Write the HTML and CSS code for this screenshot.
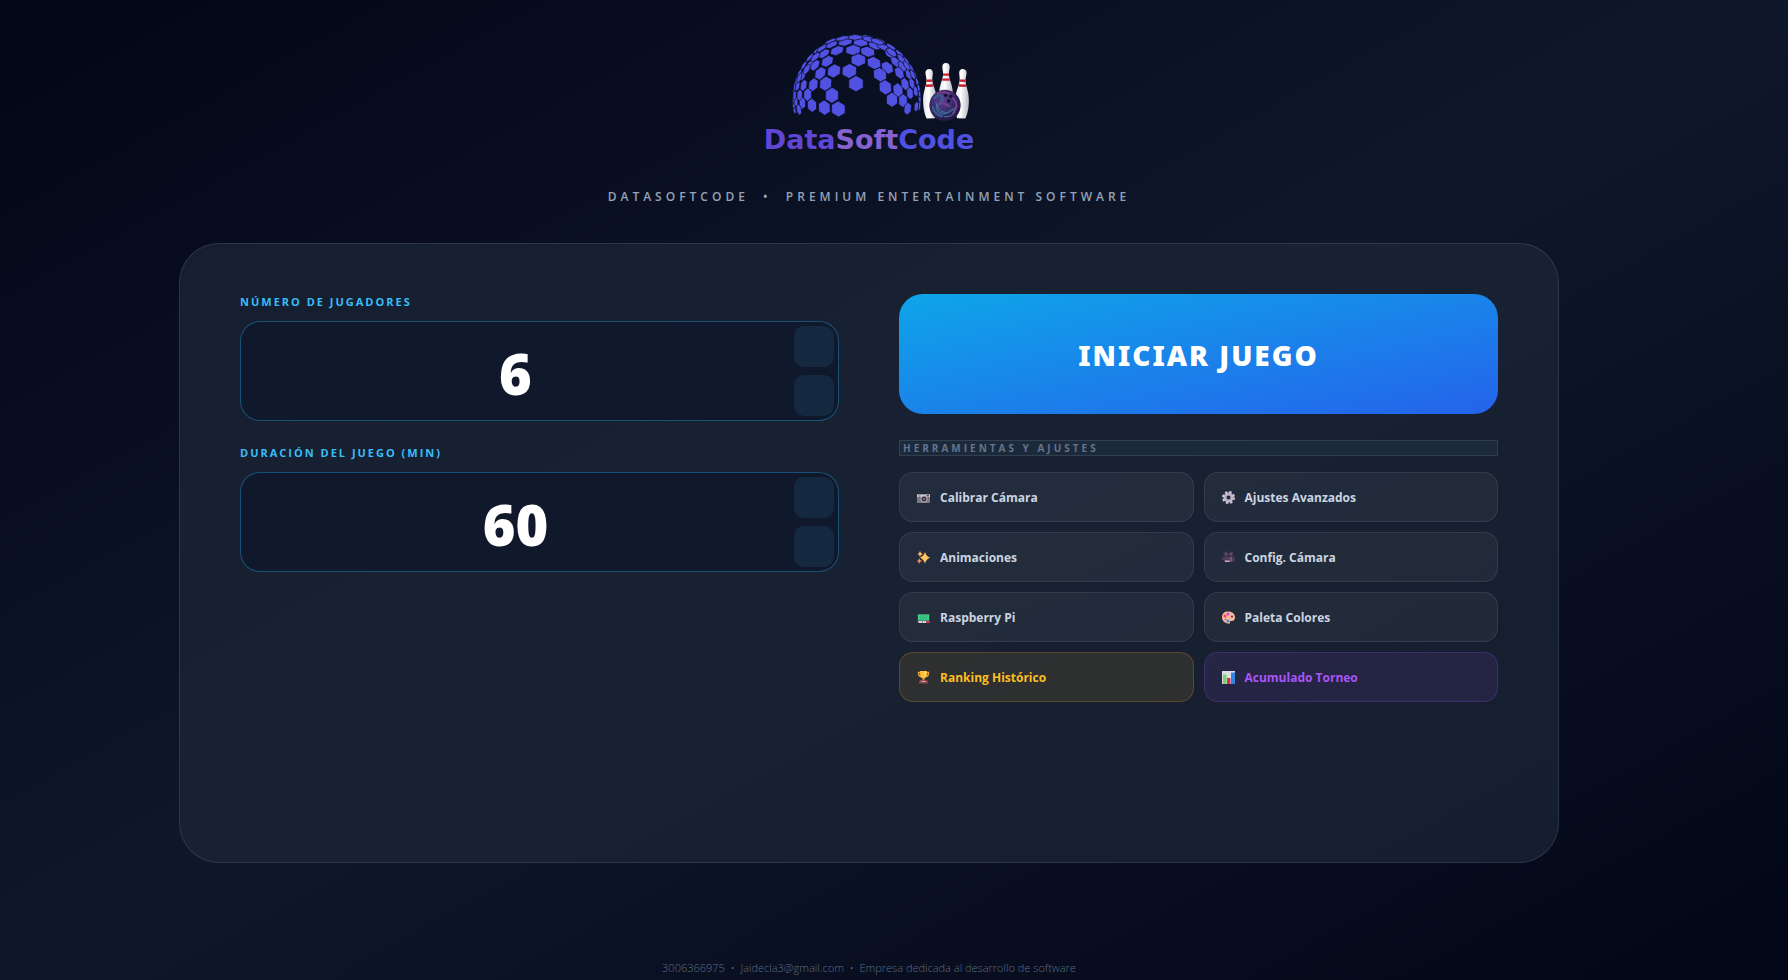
FILE: index.html
```html
<!DOCTYPE html>
<html lang="es">
<head>
    <meta charset="UTF-8">
    <meta name="viewport" content="width=device-width, initial-scale=1.0">
    <title>DataSoftCode</title>
    <link rel="stylesheet" href="styles.css">
</head>
<body>
    <header class="header">
        <svg class="logo" viewBox="66 40 642 273" aria-hidden="true">
            <defs>
                <radialGradient id="ball-fill" cx="0.4" cy="0.35" r="0.65">
                    <stop offset="0" stop-color="#5b3f8f"/>
                    <stop offset="0.55" stop-color="#3a2d6b"/>
                    <stop offset="1" stop-color="#241746"/>
                </radialGradient>
                <linearGradient id="pin-fill" x1="0" x2="1" y1="0" y2="0">
                    <stop offset="0" stop-color="#e4e2e8"/>
                    <stop offset="0.4" stop-color="#ffffff"/>
                    <stop offset="1" stop-color="#b9b7bf"/>
                </linearGradient>
                <g id="pin">
                    <path fill="url(#pin-fill)" d="M0 0c8 0 12 6 11 14-1 9-3 14-2 22 1 17 12 31 12 62 0 22-4 40-9 50h-24c-5-10-9-28-9-50 0-31 11-45 12-62 1-8-1-13-2-22-1-8 3-14 11-14z"/>
                    <path stroke="#c5202f" stroke-width="7" d="M-9 35H9M-11 50H11"/>
                </g>
            </defs>
            <g id="dome" fill="#5152e2" stroke="#080d1f" stroke-width="2"></g>
            <use href="#pin" transform="translate(567 148) rotate(-2)"/>
            <use href="#pin" transform="translate(669 148) rotate(2)"/>
            <use href="#pin" transform="translate(618 130)"/>
            <circle cx="615" cy="257" r="47" fill="url(#ball-fill)"/>
            <g fill="none" stroke-linecap="round">
                <path stroke="#39608f" stroke-width="6" d="M583 236c14-16 28-8 24 5s-20 10-17 25 24 20 36 11 20-7 24-18M578 262c3 15 14 24 28 28"/>
                <path stroke="#7d3b91" stroke-width="5" d="M592 222c14-7 26-6 38 1M638 235c15 13 14 32 1 45M599 252c13-4 21 2 30 8"/>
                <path stroke="#447fa5" stroke-width="3" d="M588 250c4 16 12 25 27 28M613 291c14 2 24-4 31-12"/>
            </g>
            <g fill="#150f2b">
                <circle cx="617" cy="227" r="5"/>
                <circle cx="632" cy="230" r="5"/>
                <circle cx="626" cy="244" r="5"/>
            </g>
        </svg>
        <h1 class="brand"><span class="brand-data">Data</span><span class="brand-soft">Soft</span><span class="brand-code">Code</span></h1>
        <p class="tagline">DATASOFTCODE &nbsp;•&nbsp; PREMIUM ENTERTAINMENT SOFTWARE</p>
    </header>

    <main class="card">
        <section class="column">
            <div class="field">
                <label for="players">NÚMERO DE JUGADORES</label>
                <div class="spin-box">
                    <input type="number" id="players" value="6" min="1" max="12">
                    <div class="spin-buttons">
                        <button type="button" aria-label="Más jugadores" onclick="step('players', 1)"></button>
                        <button type="button" aria-label="Menos jugadores" onclick="step('players', -1)"></button>
                    </div>
                </div>
            </div>
            <div class="field">
                <label for="duration">DURACIÓN DEL JUEGO (MIN)</label>
                <div class="spin-box">
                    <input type="number" id="duration" value="60" min="5" max="300">
                    <div class="spin-buttons">
                        <button type="button" aria-label="Más minutos" onclick="step('duration', 5)"></button>
                        <button type="button" aria-label="Menos minutos" onclick="step('duration', -5)"></button>
                    </div>
                </div>
            </div>
        </section>

        <section class="column">
            <button type="button" class="start-btn">INICIAR JUEGO</button>
            <h2 class="tools-title">HERRAMIENTAS Y AJUSTES</h2>
            <div class="tools">
                <button type="button" class="tool-btn">
                    <svg class="icon" viewBox="0 0 26 26">
                        <path fill="#7d7781" d="M0 7h26v17H0z"/>
                        <path fill="#d9d3dc" d="M0 7h26v5H0z"/>
                        <path fill="#4c4354" d="M3 9h4v2H3zM19 8h5v3h-5z"/>
                        <circle cx="14" cy="16" r="7" fill="#b5adb9"/>
                        <circle cx="14" cy="16" r="5" fill="#3f3449"/>
                        <circle cx="14" cy="16" r="2" fill="#857a91"/>
                    </svg>
                    Calibrar Cámara
                </button>
                <button type="button" class="tool-btn">
                    <svg class="icon" viewBox="0 0 26 26">
                        <circle cx="13" cy="13" r="11" fill="none" stroke="#cfc8d6" stroke-width="4" stroke-dasharray="5 3.64"/>
                        <circle cx="13" cy="13" r="7" fill="none" stroke="#c3bbcb" stroke-width="6"/>
                        <circle cx="13" cy="13" r="5" fill="none" stroke="#9d94a8" stroke-width="2"/>
                    </svg>
                    Ajustes Avanzados
                </button>
                <button type="button" class="tool-btn">
                    <svg class="icon" viewBox="0 0 26 26">
                        <path fill="#ffc45d" d="M16 2c2 6 4 9 10 11-6 3-8 6-10 12-2-6-5-9-10-12 5-2 8-5 10-11z"/>
                        <path fill="#ffb267" d="M6 0l2 4 4 2-4 2-2 4-2-4-3-2 3-2z"/>
                        <path fill="#ff8f65" d="M4 14l2 4 4 2-4 2-2 4-1-4-3-2 3-2z"/>
                    </svg>
                    Animaciones
                </button>
                <button type="button" class="tool-btn">
                    <svg class="icon" viewBox="0 0 26 26">
                        <circle cx="8" cy="6" r="5" fill="#49364f"/>
                        <circle cx="18" cy="6" r="5" fill="#49364f"/>
                        <circle cx="8" cy="6" r="2" fill="#6d5875"/>
                        <circle cx="18" cy="6" r="2" fill="#6d5875"/>
                        <path fill="#513d59" d="M4 11h17v11H4zM0 13h4v5H0zM21 14l4-3v12l-4-3z"/>
                        <path fill="#d4a7c5" d="M6 19h9v3H6z"/>
                        <path fill="#8f7b9a" d="M17 12h2v9h-2z"/>
                    </svg>
                    Config. Cámara
                </button>
                <button type="button" class="tool-btn">
                    <svg class="icon" viewBox="0 0 26 26">
                        <path fill="#59495f" d="M1 6h24v18H1z"/>
                        <path fill="#3fd08b" d="M2 7h22v12H2z"/>
                        <path stroke="#25976a" stroke-width="1" d="M5 10h16M5 13h16M5 16h16"/>
                        <path fill="#d7d0dc" d="M3 20h7v4H3zM11 20h7v4h-7z"/>
                        <path fill="#e52c62" d="M19 20h6v4h-6z"/>
                    </svg>
                    Raspberry Pi
                </button>
                <button type="button" class="tool-btn">
                    <svg class="icon" viewBox="0 0 26 26">
                        <path fill="#ffb49a" d="M12 1c9 0 14 5 14 12 0 5-3 7-7 7-3 0-4 1-3 3 0 2-1 3-4 2C5 24 0 19 0 12S5 1 12 1z"/>
                        <circle cx="20" cy="11" r="2" fill="#343044"/>
                        <circle cx="12" cy="6" r="3" fill="#b34bea"/>
                        <circle cx="6" cy="10" r="3" fill="#f23c67"/>
                        <circle cx="7" cy="17" r="2" fill="#3fa9b8"/>
                        <circle cx="12" cy="20" r="3" fill="#3c8fe4"/>
                    </svg>
                    Paleta Colores
                </button>
                <button type="button" class="tool-btn ranking">
                    <svg class="icon" viewBox="0 0 26 26">
                        <path fill="none" stroke="#e8a03c" stroke-width="3" d="M7 3H3c0 6 2 8 5 8M19 3h4c0 6-2 8-5 8"/>
                        <path fill="#ffbd3e" d="M6 0h14v6c0 6-3 9-7 9s-7-3-7-9z"/>
                        <path fill="#ffe07a" d="M15 1h3v6l-3 4z"/>
                        <path fill="#e8953a" d="M11 14h4v5h-4z"/>
                        <path fill="#8d4a5b" d="M6 18h14l3 7H3z"/>
                        <path fill="#f0b060" d="M9 20h8v2H9z"/>
                    </svg>
                    Ranking Histórico
                </button>
                <button type="button" class="tool-btn torneo">
                    <svg class="icon" viewBox="0 0 26 26">
                        <path fill="#d9dfe4" d="M0 0h26v26H0z"/>
                        <path fill="#78d65e" d="M2 7h7v19H2z"/>
                        <path fill="#d8305f" d="M10 14h7v12h-7z"/>
                        <path fill="#2f86dc" d="M18 3h8v23h-8z"/>
                    </svg>
                    Acumulado Torneo
                </button>
            </div>
        </section>
    </main>

    <footer class="footer">3006366975 &nbsp;•&nbsp; Jaidecla3@gmail.com &nbsp;•&nbsp; Empresa dedicada al desarrollo de software</footer>

    <script>
        // Hexagon centres of the logo dome
        const cells = [
            [295,268],[253,264],[216,257],[187,250],[168,246],[177,270],
            [276,227],[203,225],[179,226],[164,227],
            [257,192],[220,195],[191,197],[173,199],
            [282,154],[241,161],[210,136],[188,168],[328,154],[348,192],
            [355,121],[262,125],[225,137],[200,149],[178,175],
            [291,93],[252,102],[226,112],[339,91],[316,68],[275,75],[245,86],
            [383,96],[362,69],[345,53],[307,56],[272,64],[405,78],[388,59],
            [451,104],[428,81],[412,66],[402,130],[442,144],[467,127],[455,98],
            [487,140],[420,165],[478,160],[436,203],[456,240],[474,211],
            [489,243],[495,193],[506,165],[510,221],[516,192],[527,215],
            [503,267],[529,261],[484,118],[500,138],[518,165]
        ];
        // Outer row of the dome, as angles
        const rim = [171, 176, 181, 186, 192, 198, 205, 213, 222, 232, 243, 255, 267, 279, 291, 303, 313, 322, 330, 337, 344, 350, 356, 361, 366];
        const dome = { x: 350, y: 240, r: 199, size: 25 };

        // Each hexagon is flattened towards the rim of the sphere
        function hexPoints(cx, cy) {
            const dx = cx - dome.x;
            const dy = cy - dome.y;
            const dist = Math.hypot(dx, dy);
            const flat = Math.sqrt(Math.max(0.03, 1 - (dist / dome.r) ** 2));
            const ux = dx / dist;
            const uy = dy / dist;
            const size = dome.size * (1 - 0.6 * (1 - flat) * Math.abs(ux));
            const points = [];
            for (let i = 0; i < 6; i++) {
                const a = Math.PI / 180 * (60 * i + 30);
                const hx = Math.cos(a) * size;
                const hy = Math.sin(a) * size;
                const along = (hx * ux + hy * uy) * (flat - 1);
                points.push(`${(cx + hx + along * ux).toFixed(1)},${(cy + hy + along * uy).toFixed(1)}`);
            }
            return points.join(' ');
        }

        function drawDome() {
            const group = document.getElementById('dome');
            const outer = rim.map(deg => {
                const a = deg * Math.PI / 180;
                return [dome.x + Math.cos(a) * 189, dome.y + Math.sin(a) * 189];
            });
            outer.concat(cells).forEach(([x, y]) => {
                const hex = document.createElementNS('http://www.w3.org/2000/svg', 'polygon');
                hex.setAttribute('points', hexPoints(x, y));
                group.appendChild(hex);
            });
        }

        function step(id, amount) {
            const input = document.getElementById(id);
            const next = Number(input.value) + amount;
            input.value = Math.min(Number(input.max), Math.max(Number(input.min), next));
        }

        drawDome();
    </script>
</body>
</html>
```
FILE: styles.css
```css
* {
    box-sizing: border-box;
}
body {
    margin: 0;
    min-height: 100vh;
    padding: 33px 50px 4px 0;
    display: flex;
    flex-direction: column;
    align-items: center;
    background: linear-gradient(to bottom right, #020617, #0f172a 50%, #020617);
    color: #e2e8f0;
    font-family: 'Open Sans', 'Noto Sans', sans-serif;
}
button, input {
    font-family: inherit;
}
.header {
    display: flex;
    flex-direction: column;
    align-items: center;
}
.logo {
    width: 214px;
    height: 91px;
}
.brand {
    margin: 0;
    font-family: 'DejaVu Sans', sans-serif;
    font-size: 27px;
    font-weight: 700;
    line-height: 32px;
}
.brand-data {
    color: #6046d4;
}
.brand-soft {
    color: #8562cf;
}
.brand-code {
    color: #5051e0;
}
.tagline {
    margin: 32px 0 37px;
    color: #94a3b8;
    font-size: 12px;
    font-weight: 600;
    line-height: 18px;
    letter-spacing: 4px;
}
.card {
    flex: 1;
    width: 100%;
    max-width: 1380px;
    padding: 50px 60px;
    display: grid;
    grid-template-columns: 1fr 1fr;
    gap: 60px;
    background: rgba(28, 39, 54, 0.7);
    border: 1px solid rgba(255, 255, 255, 0.1);
    border-radius: 40px;
}
.column {
    display: flex;
    flex-direction: column;
}
.field {
    display: flex;
    flex-direction: column;
    margin-bottom: 24px;
}
.field label {
    margin-bottom: 11px;
    color: #38bdf8;
    font-size: 11px;
    font-weight: 700;
    line-height: 16px;
    letter-spacing: 2px;
}
.spin-box {
    display: flex;
    gap: 8px;
    height: 100px;
    padding: 4px;
    background: rgba(15, 23, 42, 0.8);
    border: 1px solid rgba(30, 120, 170, 0.6);
    border-radius: 20px;
}
.spin-box input {
    flex: 1;
    min-width: 0;
    padding: 4px 0 0;
    background: none;
    border: none;
    outline: none;
    color: white;
    font-family: 'Noto Sans', sans-serif;
    font-size: 56px;
    font-weight: 900;
    text-align: center;
    appearance: textfield;
}
.spin-box input::-webkit-inner-spin-button {
    appearance: none;
}
.spin-buttons {
    width: 40px;
    display: flex;
    flex-direction: column;
    gap: 8px;
}
.spin-buttons button {
    flex: 1;
    padding: 0;
    background: rgba(56, 189, 248, 0.1);
    border: none;
    border-radius: 10px;
    cursor: pointer;
}
.spin-buttons button:hover {
    background: rgba(56, 189, 248, 0.2);
}
.start-btn {
    height: 120px;
    padding: 2px 0 0;
    background: linear-gradient(to bottom right, #0ea5e9, #2563eb);
    border: none;
    border-radius: 24px;
    color: white;
    font-family: 'Noto Sans', sans-serif;
    font-size: 28px;
    font-weight: 900;
    letter-spacing: 2px;
    cursor: pointer;
}
.tools-title {
    margin: 26px 0 16px;
    padding: 0 3px;
    background: rgba(35, 55, 70, 0.4);
    border: 1px solid rgba(255, 255, 255, 0.1);
    color: #64748b;
    font-size: 10px;
    font-weight: 700;
    line-height: 14px;
    letter-spacing: 3px;
}
.tools {
    display: grid;
    grid-template-columns: 1fr 1fr;
    gap: 10px;
}
.tool-btn {
    height: 50px;
    padding: 0 17px;
    display: flex;
    align-items: center;
    gap: 10px;
    background: rgba(255, 255, 255, 0.05);
    border: 1px solid rgba(255, 255, 255, 0.08);
    border-radius: 14px;
    color: #cbd5e1;
    font-size: 12px;
    font-weight: 700;
    text-align: left;
    cursor: pointer;
}
.tool-btn:hover {
    background: rgba(255, 255, 255, 0.1);
}
.tool-btn.ranking {
    background: rgba(251, 191, 36, 0.1);
    border-color: rgba(251, 191, 36, 0.2);
    color: #fbbf24;
}
.tool-btn.torneo {
    background: rgba(168, 85, 247, 0.1);
    border-color: rgba(168, 85, 247, 0.2);
    color: #a855f7;
}
.icon {
    width: 13px;
    height: 13px;
}
.footer {
    margin-top: 97px;
    color: #5d6b80;
    font-size: 11px;
    font-weight: 300;
    line-height: 16px;
}
```
